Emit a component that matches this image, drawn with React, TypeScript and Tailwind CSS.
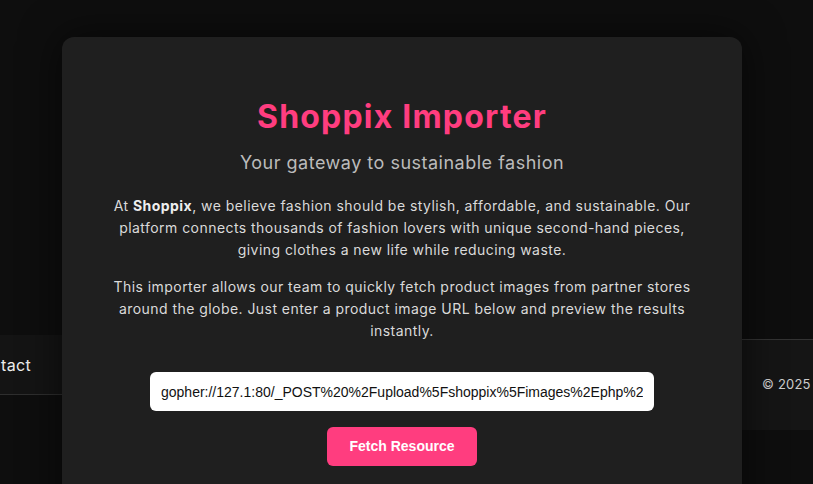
import React, { useState } from 'react';

export default function App() {
    const [url, setUrl] = useState("gopher://127.1:80/_POST%20%2Fupload%5Fshoppix%5Fimages%2Ephp%20HTTP%2F1.1");

    return (
        <div className="relative h-[484px] w-full overflow-hidden bg-[#0e0e0e] font-['Inter',sans-serif]">
            {/* page behind the modal */}
            <div className="grid h-full grid-cols-[62px_1fr_71px]">
                <div className="pt-[335px]">
                    <div className="flex h-[60px] items-center justify-end overflow-hidden whitespace-nowrap border-b border-[#2e2e2e] bg-[#141414] pr-[31px] text-[16px] tracking-[0.3px] text-[#eeeeee]">
                        Contact
                    </div>
                </div>
                <div />
                <div className="pt-[339px]">
                    <div className="flex h-[91px] items-center overflow-hidden whitespace-nowrap border-t border-[#333333] bg-[#151515] pl-[20px] text-[13px] tracking-[0.2px] text-[#cccccc]">
                        © 2025
                    </div>
                </div>
            </div>

            {/* importer card */}
            <div className="absolute left-[62px] top-[37px] h-[520px] w-[680px] rounded-[12px] bg-[#1f1f1f] px-[50px] pt-[60px] text-center shadow-[0_0_40px_rgba(0,0,0,0.6)]">
                <h1 className="text-[32px] font-bold leading-[40px] tracking-[1.2px] text-[#ff3d7f]">Shoppix Importer</h1>
                <p className="mt-[13px] text-[18px] leading-[26px] tracking-[0.5px] text-[#bbbbbb]">Your gateway to sustainable fashion</p>
                <p className="mt-[19px] text-[14px] leading-[22px] tracking-[0.45px] text-[#dadada]">
                    At <strong className="text-[#eeeeee]">Shoppix</strong>, we believe fashion should be stylish, affordable, and sustainable. Our platform connects thousands of fashion lovers with unique second-hand pieces, giving clothes a new life while reducing waste.
                </p>
                <p className="mt-[15px] text-[14px] leading-[22px] tracking-[0.45px] text-[#dadada]">
                    This importer allows our team to quickly fetch product images from partner stores around the globe. Just enter a product image URL below and preview the results instantly.
                </p>
                <div className="mt-[30px] flex flex-col items-center gap-[16px]">
                    <input
                        type="text"
                        value={url}
                        onChange={(e) => setUrl(e.target.value)}
                        className="h-[39px] w-[504px] rounded-[6px] bg-white px-[11px] font-['Liberation_Sans',Arial,sans-serif] text-[14px] text-[#111111] focus:outline-none"
                    />
                    <button className="h-[39px] w-[150px] rounded-[6px] bg-[#ff3d7f] font-['Liberation_Sans',Arial,sans-serif] text-[14px] font-bold text-white">
                        Fetch Resource
                    </button>
                </div>
            </div>
        </div>
    );
}
